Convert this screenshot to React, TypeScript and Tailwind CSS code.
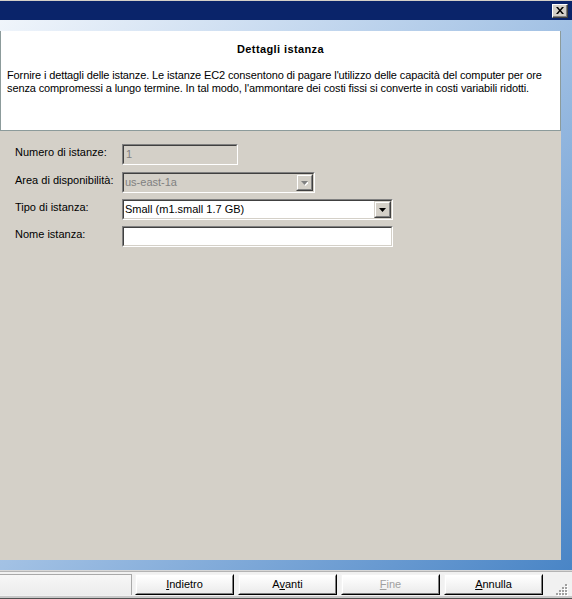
import React from "react";

const font = "font-['Tahoma','Liberation_Sans','Arial',sans-serif]";

function Sunken({ className = "", inner = "", children }: { className?: string; inner?: string; children?: React.ReactNode }) {
  return (
    <div className={`border-t border-l border-[#808080] border-b border-r border-b-white border-r-white ${className}`}>
      <div className={`h-full border-t border-l border-[#404040] border-b border-r border-b-[#d4d0c8] border-r-[#d4d0c8] flex items-center ${inner}`}>
        {children}
      </div>
    </div>
  );
}

function DropButton({ disabled }: { disabled?: boolean }) {
  return (
    <div className="ml-auto w-[17px] h-full border-t border-l border-[#d4d0c8] border-b border-r border-b-[#404040] border-r-[#404040] bg-[#d4d0c8]">
      <div className="w-full h-full border-t border-l border-white border-b border-r border-b-[#808080] border-r-[#808080] flex items-center justify-center">
        <svg width="7" height="5" viewBox="0 0 7 5" className="mt-[1px]">
          {disabled ? (
            <>
              <path d="M1 1h7l-3.5 4z" fill="#ffffff" />
              <path d="M0 0h7l-3.5 4z" fill="#808080" />
            </>
          ) : (
            <path d="M0 0h7l-3.5 4z" fill="#000000" />
          )}
        </svg>
      </div>
    </div>
  );
}

function Row({ label, children, className = "" }: { label: string; children: React.ReactNode; className?: string }) {
  return (
    <div className={`flex items-start ${className}`}>
      <div className="w-[107px] pt-[2px] text-black">{label}</div>
      {children}
    </div>
  );
}

function WinButton({ children, disabled }: { children: React.ReactNode; disabled?: boolean }) {
  return (
    <div className="w-[99px] h-[21px] border-t border-l border-[#f4f4f4] border-b border-r border-b-black border-r-black">
      <div className={`h-full border-t border-l border-white border-b border-r border-b-[#808080] border-r-[#808080] bg-gradient-to-b from-white to-[#ebebeb] flex items-center justify-center ${disabled ? "text-[#a0a0a0]" : "text-black"}`}>
        {children}
      </div>
    </div>
  );
}

export default function App() {
  return (
    <div className={`w-[572px] h-[599px] flex flex-col bg-[#d4d0c8] text-[11px] leading-[13px] ${font}`}>
      {/* Title bar */}
      <div className="h-[20px] border-t border-[#d4d0c8] bg-[#0a246a] flex items-start justify-end pr-[4px] pt-[3px]">
        <div className="w-[16px] h-[14px] bg-[#d4d0c8] border-t border-l border-white border-b border-r border-b-[#404040] border-r-[#404040]">
          <div className="w-full h-full border-b border-r border-b-[#808080] border-r-[#808080] flex items-center justify-center">
            <svg width="8" height="7" viewBox="0 0 8 7">
              <path d="M0 0h2l2 2.5L6 0h2L5 3.5 8 7H6L4 4.5 2 7H0l3-3.5z" fill="#000" />
            </svg>
          </div>
        </div>
      </div>

      {/* Main framed area */}
      <div className="flex-1 flex bg-gradient-to-br from-[#f0f5fb] via-[#a2c1e4] to-[#4985c6] pt-[11px] pr-[11px] pb-[10px]">
        <div className="flex-1 flex flex-col bg-[#d4d0c8]">
          {/* Header */}
          <div className="h-[100px] bg-white border-l border-r border-b border-[#8c9b9b] pt-[12px] px-[6px]">
            <div className="text-center font-bold text-black tracking-[0.4px]">Dettagli istanza</div>
            <p className="mt-[13px] text-black tracking-[-0.12px]">
              Fornire i dettagli delle istanze. Le istanze EC2 consentono di pagare l'utilizzo delle capacità del computer per ore senza compromessi a lungo termine. In tal modo, l'ammontare dei costi fissi si converte in costi variabili ridotti.
            </p>
          </div>

          {/* Form */}
          <div className="flex flex-col pl-[15px] pt-[13px]">
            <Row label="Numero di istanze:">
              <Sunken className="w-[116px] h-[21px]" inner="bg-[#d4d0c8] pl-[2px] text-[#808080]">
                1
              </Sunken>
            </Row>
            <Row label="Area di disponibilità:" className="mt-[7px]">
              <Sunken className="w-[193px] h-[21px]" inner="bg-[#d4d0c8] text-[#808080]">
                <span className="pl-[1px]">us-east-1a</span>
                <DropButton disabled />
              </Sunken>
            </Row>
            <Row label="Tipo di istanza:" className="mt-[6px]">
              <Sunken className="w-[271px] h-[21px]" inner="bg-white text-black">
                <span className="pl-[1px]">Small (m1.small 1.7 GB)</span>
                <DropButton />
              </Sunken>
            </Row>
            <Row label="Nome istanza:" className="mt-[6px]">
              <Sunken className="w-[271px] h-[21px]" inner="bg-white" />
            </Row>
          </div>
        </div>
        <div className="w-0" />
      </div>

      {/* Button bar */}
      <div className="h-[29px] flex flex-col bg-[#f1f1f1] border-t border-[#d8d8d8]">
        <div className="flex-1 flex items-start pt-[2px] border-t border-[#b4b4b4]">
          <div className="w-[132px] h-[21px] border-t border-r border-[#a9a9a9] bg-gradient-to-b from-[#f7f7f7] to-[#ececec]" />
          <div className="flex gap-[4px] ml-[3px]">
            <WinButton>
              <span><span className="underline">I</span>ndietro</span>
            </WinButton>
            <WinButton>
              <span>A<span className="underline">v</span>anti</span>
            </WinButton>
            <WinButton disabled>
              <span><span className="underline">F</span>ine</span>
            </WinButton>
            <WinButton>
              <span><span className="underline">A</span>nnulla</span>
            </WinButton>
          </div>
          <div className="ml-auto mr-[4px] mt-[10px]">
            <svg width="12" height="12" viewBox="0 0 12 12">
              {[[9, 0], [6, 3], [9, 3], [3, 6], [6, 6], [9, 6], [0, 9], [3, 9], [6, 9], [9, 9]].map(([x, y], i) => (
                <g key={i}>
                  <rect x={x + 1} y={y + 1} width="2" height="2" fill="#ffffff" />
                  <rect x={x} y={y} width="2" height="2" fill="#a0a0a0" />
                </g>
              ))}
            </svg>
          </div>
        </div>
        <div className="h-[2px] bg-[#c8c8c8]" />
        <div className="h-[2px] bg-[#505050]" />
      </div>
    </div>
  );
}
